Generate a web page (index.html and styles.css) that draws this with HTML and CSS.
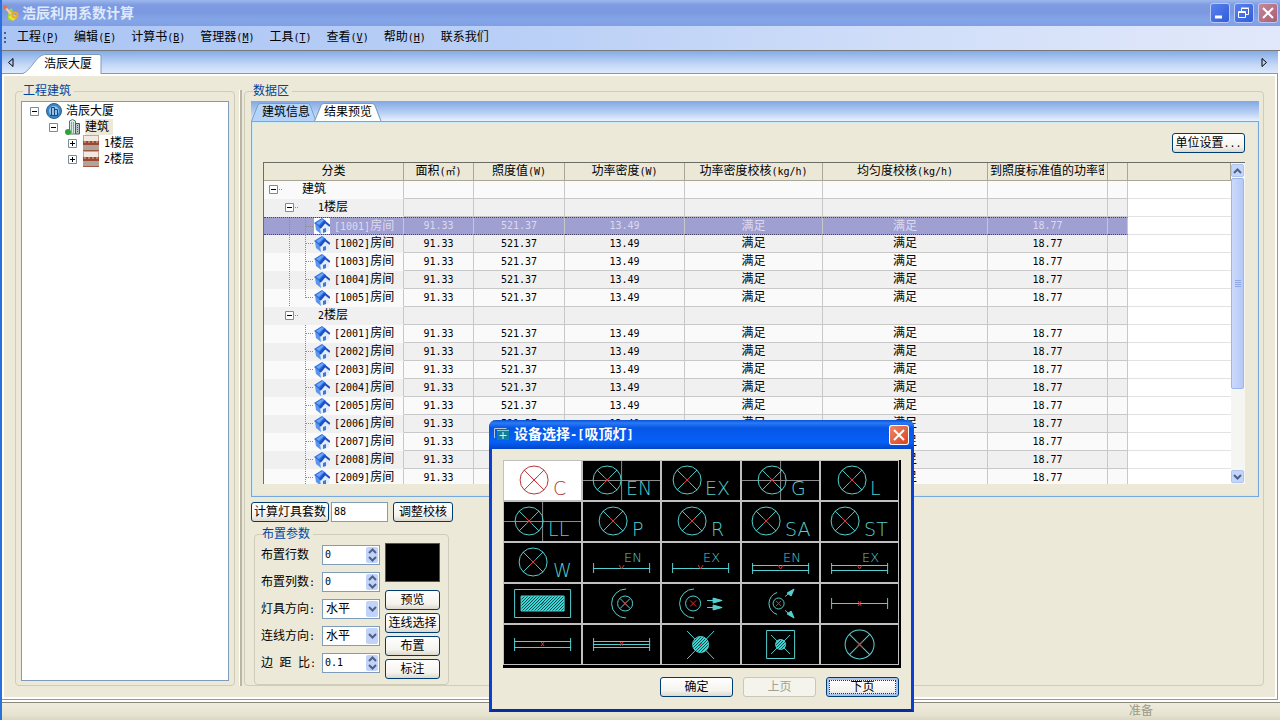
FILE: index.html
```html
<!DOCTYPE html>
<html lang="zh-CN">
  <head>
    <meta charset="UTF-8" />
    <meta name="viewport" content="width=device-width, initial-scale=1.0" />
    <title>浩辰利用系数计算</title>
    <link rel="stylesheet" href="styles.css">
  </head>
  <body>
    <svg class="defs" width="0" height="0" aria-hidden="true">
      <defs>
        <symbol id="house" viewBox="0 0 16 16">
          <path d="M1 6l6 4v6l-5-4z" fill="#5b96ee" />
          <path d="M6 10l5-6 4 4v5l-8 3z" fill="#e3ecfb" />
          <path d="M0 5 8 0l4 3-6 7z" fill="#2a6be0" />
          <path d="M2 5l6-4 2 1-5 5z" fill="#6ba6f8" />
          <path d="M6 10l5-6 5 4" fill="none" stroke="#1c4fc0" stroke-width="2" />
          <path d="M9 11l3-1v4l-3 1z" fill="#3f78cf" />
        </symbol>
        <symbol id="floor" viewBox="0 0 16 16">
          <path d="M0 0h16v16H0z" fill="#f3e9e3" />
          <path d="M0 0h1v16H0zM15 0h1v16h-1zM0 0h16v1H0z" fill="#c8a493" />
          <path d="M0 6h16v4H0z" fill="#9b4a31" />
          <path d="M1 7h2M5 7h2M9 7h2M13 7h2" stroke="#e9b9a0" />
          <path d="M0 10h16v5H0z" fill="#b0a39c" />
          <path d="M0 15h16v1H0z" fill="#a2583f" />
        </symbol>
        <symbol id="minus" viewBox="0 0 9 9">
          <path d="M.5.5h8v8h-8z" fill="#fff" stroke="#7b8a93" />
          <path d="M2 4.5h5" stroke="#000" />
        </symbol>
        <symbol id="plus" viewBox="0 0 9 9">
          <path d="M.5.5h8v8h-8z" fill="#fff" stroke="#7b8a93" />
          <path d="M2 4.5h5M4.5 2v5" stroke="#000" />
        </symbol>
        <symbol id="chevron-down" viewBox="0 0 9 6">
          <path d="M1 1l3.500 3.500L8 1" fill="none" stroke="#4d6185" stroke-width="2" />
        </symbol>
        <symbol id="chevron-up" viewBox="0 0 9 6">
          <path d="M1 5l3.500-3.500L8 5" fill="none" stroke="#4d6185" stroke-width="2" />
        </symbol>
        <symbol id="lamp" viewBox="-15 -15 30 30">
          <circle r="14" />
          <path d="M-10-10 10 10M-10 10 10-10" />
          <path class="mark" d="M-3-3 3 3M-3 3 3-3" />
        </symbol>
        <pattern id="hatch" width="3" height="3" patternUnits="userSpaceOnUse">
          <path d="M0 0h3v3H0z" fill="#3fdede" />
          <path d="M0 3 3 0" stroke="#043a3a" stroke-width="1" />
        </pattern>
      </defs>
    </svg>

    <header class="titlebar">
      <svg class="app-icon" width="18" height="18" viewBox="0 0 18 18">
        <path d="M6 6l4-2 2 9-4 4-2-2z" fill="#9fd632" />
        <path d="M6 13l5 4 5-4-5-3z" fill="#e8e32c" />
        <path d="M2 2l7 8" stroke="#f7c9a0" stroke-width="2" />
        <circle cx="13" cy="11" r="2.500" fill="none" stroke="#f2a331" stroke-width="2" />
        <circle cx="3" cy="3" r="2" fill="#d9794c" />
      </svg>
      <h1>浩辰利用系数计算</h1>
      <div class="window-buttons">
        <button type="button" class="win-btn" aria-label="最小化">
          <svg width="20" height="20" viewBox="0 0 20 20"><path d="M5 14h7" stroke="#fff" stroke-width="3" /></svg>
        </button>
        <button type="button" class="win-btn" aria-label="还原">
          <svg width="20" height="20" viewBox="0 0 20 20" fill="none" stroke="#fff">
            <path d="M7.500 8V5.500h7v6H12M7 5h8" />
            <path d="M4.500 8.500h7v6h-7zM4 9.500h8" />
          </svg>
        </button>
        <button type="button" class="win-btn close" aria-label="关闭">
          <svg width="20" height="20" viewBox="0 0 20 20"><path d="M5 5l10 10M15 5 5 15" stroke="#fff" stroke-width="2" /></svg>
        </button>
      </div>
    </header>

    <nav class="menubar">
      <a href="#">工程<span class="latin">(<u>P</u>)</span></a>
      <a href="#">编辑<span class="latin">(<u>E</u>)</span></a>
      <a href="#">计算书<span class="latin">(<u>B</u>)</span></a>
      <a href="#">管理器<span class="latin">(<u>M</u>)</span></a>
      <a href="#">工具<span class="latin">(<u>T</u>)</span></a>
      <a href="#">查看<span class="latin">(<u>V</u>)</span></a>
      <a href="#">帮助<span class="latin">(<u>H</u>)</span></a>
      <a href="#">联系我们</a>
    </nav>

    <div class="doc-tabs">
      <button type="button" class="scroll-tab" aria-label="向左">
        <svg width="6" height="9" viewBox="0 0 6 9"><path d="M5 .5v8L.5 4.500z" fill="none" stroke="#000" /></svg>
      </button>
      <button type="button" class="doc-tab">
        <svg viewBox="0 0 80 20" preserveAspectRatio="none"><path d="M0 20C10 16 14 1 23 .5h54q2 0 2 2V20" fill="#fff" stroke="#7b9ebd" /></svg>
        <span>浩辰大厦</span>
      </button>
      <button type="button" class="scroll-tab right" aria-label="向右">
        <svg width="6" height="9" viewBox="0 0 6 9"><path d="M1 .5v8l4.500-4z" fill="none" stroke="#000" /></svg>
      </button>
    </div>

    <main class="page">
      <fieldset class="group project">
        <legend>工程建筑</legend>
        <ul class="tree">
          <li>
            <svg width="9" height="9"><use href="#minus" /></svg>
            <svg width="18" height="16" viewBox="0 0 18 16">
              <circle cx="9" cy="8" r="7.500" fill="#3d86c6" stroke="#2a5f96" />
              <circle cx="9" cy="8" r="5" fill="#8fc3ec" />
              <path d="M6.500 12V4.500h3V12M9.500 6.500h3V12M5 12.500h8" fill="none" stroke="#1d4a7a" />
            </svg>
            <span>浩辰大厦</span>
          </li>
          <li class="level-1">
            <svg width="9" height="9"><use href="#minus" /></svg>
            <svg width="18" height="16" viewBox="0 0 18 16">
              <path d="M5.500 15V2l3-1.500L11.500 2v13z" fill="#dbe9e4" stroke="#4c7a6c" />
              <path d="M7.500 3v11M9.500 3v11" stroke="#7fa99b" />
              <path d="M11.500 15V4.500h4V15z" fill="#b9c4c9" stroke="#4b565c" />
              <path d="M13.500 6v8" stroke="#4b565c" stroke-dasharray="1 1" />
              <circle cx="4" cy="13" r="3" fill="#2fa23a" />
            </svg>
            <span class="current">建筑</span>
          </li>
          <li class="level-2">
            <svg width="9" height="9"><use href="#plus" /></svg>
            <svg width="18" height="16"><use href="#floor" width="16" height="16" /></svg>
            <span><span class="latin">1</span>楼层</span>
          </li>
          <li class="level-2">
            <svg width="9" height="9"><use href="#plus" /></svg>
            <svg width="18" height="16"><use href="#floor" width="16" height="16" /></svg>
            <span><span class="latin">2</span>楼层</span>
          </li>
        </ul>
      </fieldset>

      <div class="splitter"></div>

      <fieldset class="group data">
        <legend>数据区</legend>
        <div class="tab-strip">
          <button type="button" class="tab">
            <svg viewBox="0 0 66 18" preserveAspectRatio="none"><path d="M.5 18 7 2q1-1.500 3-1.500h46q2 0 3 1.500l6 16" fill="#b4d4fa" stroke="#7b9ebd" /></svg>
            <span>建筑信息</span>
          </button>
          <button type="button" class="tab active">
            <svg viewBox="0 0 66 18" preserveAspectRatio="none"><path d="M.5 18 7 2q1-1.500 3-1.500h46q2 0 3 1.500l6 16" fill="#fff" stroke="#7b9ebd" /></svg>
            <span>结果预览</span>
          </button>
        </div>

        <div class="tab-panel">
          <button type="button" class="btn unit">单位设置<span class="latin">...</span></button>
          <div class="grid-view">
            <div class="grid-scroll">
              <table>
                <colgroup>
                  <col class="c-name"><col class="c-area"><col class="c-lux"><col class="c-density">
                  <col class="c-check"><col class="c-uniform"><col class="c-std"><col class="c-extra"><col>
                </colgroup>
                <thead>
                  <tr>
                    <th>分类</th>
                    <th>面积<span class="latin">(㎡)</span></th>
                    <th>照度值<span class="latin">(W)</span></th>
                    <th>功率密度<span class="latin">(W)</span></th>
                    <th>功率密度校核<span class="latin">(kg/h)</span></th>
                    <th>均匀度校核<span class="latin">(kg/h)</span></th>
                    <th><div class="clip">到照度标准值的功率密度</div></th>
                    <th></th>
                    <th></th>
                  </tr>
                </thead>
                <tbody id="rows"></tbody>
              </table>
            </div>
            <div class="scrollbar">
              <button type="button" aria-label="向上滚动"><svg width="9" height="6"><use href="#chevron-up" /></svg></button>
              <div class="thumb"></div>
              <button type="button" aria-label="向下滚动"><svg width="9" height="6"><use href="#chevron-down" /></svg></button>
            </div>
          </div>
        </div>

        <div class="actions">
          <button type="button" class="btn">计算灯具套数</button>
          <input type="text" class="field latin" value="88" aria-label="灯具套数" />
          <button type="button" class="btn adjust">调整校核</button>
        </div>

        <fieldset class="group params">
          <legend>布置参数</legend>
          <div class="form">
            <label for="rows-count">布置行数</label>
            <div class="control">
              <input type="text" id="rows-count" class="field latin" value="0" />
              <span class="arrows"><svg width="9" height="6"><use href="#chevron-up" /></svg><svg width="9" height="6"><use href="#chevron-down" /></svg></span>
            </div>
            <label for="cols-count">布置列数<span class="latin">:</span></label>
            <div class="control">
              <input type="text" id="cols-count" class="field latin" value="0" />
              <span class="arrows"><svg width="9" height="6"><use href="#chevron-up" /></svg><svg width="9" height="6"><use href="#chevron-down" /></svg></span>
            </div>
            <label for="lamp-dir">灯具方向<span class="latin">:</span></label>
            <div class="control">
              <select id="lamp-dir" class="field"><option>水平</option><option>垂直</option></select>
              <span class="arrows"><svg width="9" height="6"><use href="#chevron-down" /></svg></span>
            </div>
            <label for="wire-dir">连线方向<span class="latin">:</span></label>
            <div class="control">
              <select id="wire-dir" class="field"><option>水平</option><option>垂直</option></select>
              <span class="arrows"><svg width="9" height="6"><use href="#chevron-down" /></svg></span>
            </div>
            <label for="edge-ratio" class="spread"><i>边</i><i>距</i><i>比<span class="latin">:</span></i></label>
            <div class="control">
              <input type="text" id="edge-ratio" class="field latin" value="0.1" />
              <span class="arrows"><svg width="9" height="6"><use href="#chevron-up" /></svg><svg width="9" height="6"><use href="#chevron-down" /></svg></span>
            </div>
          </div>
          <div class="side">
            <div class="preview"></div>
            <button type="button" class="btn">预览</button>
            <button type="button" class="btn">连线选择</button>
            <button type="button" class="btn">布置</button>
            <button type="button" class="btn">标注</button>
          </div>
        </fieldset>
      </fieldset>
    </main>

    <footer class="statusbar"><span>准备</span></footer>

    <section class="dialog" role="dialog" aria-labelledby="dialog-title">
      <header>
        <svg width="16" height="16" viewBox="0 0 16 16">
          <path d="M.5 11V1.500h12" fill="none" stroke="#b9c6d8" />
          <path d="M3 4h12v9H3z" fill="#0f7f9c" />
          <path d="M3 3.500h12" stroke="#7fd0e0" />
          <path d="M9 5v7M5.500 8.500h7" stroke="#e6fbff" />
        </svg>
        <h2 id="dialog-title">设备选择<span>-[</span>吸顶灯<span>]</span></h2>
        <button type="button" class="win-btn close" aria-label="关闭">
          <svg width="20" height="20" viewBox="0 0 20 20"><path d="M5 5l10 10M15 5 5 15" stroke="#fff" stroke-width="2" /></svg>
        </button>
      </header>
      <div class="dialog-body">
        <div class="symbols">
          <button type="button" class="selected"><svg viewBox="0 0 77 39"><use href="#lamp" x="15" y="4" width="30" height="30" /><text x="49" y="34">C</text></svg></button>
          <button type="button"><svg viewBox="0 0 77 39"><path class="cross" d="M0 19.500h77M38.500 0v39" /><use href="#lamp" x="9" y="4" width="30" height="30" /><text x="43" y="34">EN</text></svg></button>
          <button type="button"><svg viewBox="0 0 77 39"><use href="#lamp" x="10" y="4" width="30" height="30" /><text x="43" y="34">EX</text></svg></button>
          <button type="button"><svg viewBox="0 0 77 39"><path class="cross" d="M0 19.500h77M38.500 0v39" /><use href="#lamp" x="15" y="4" width="30" height="30" /><text x="49" y="34">G</text></svg></button>
          <button type="button"><svg viewBox="0 0 77 39"><use href="#lamp" x="16" y="4" width="30" height="30" /><text x="49" y="34">L</text></svg></button>

          <button type="button"><svg viewBox="0 0 77 39"><path class="cross" d="M0 19.500h77M38.500 0v39" /><use href="#lamp" x="10" y="4" width="30" height="30" /><text x="44" y="34">LL</text></svg></button>
          <button type="button"><svg viewBox="0 0 77 39"><use href="#lamp" x="15" y="4" width="30" height="30" /><text x="49" y="34">P</text></svg></button>
          <button type="button"><svg viewBox="0 0 77 39"><use href="#lamp" x="15" y="4" width="30" height="30" /><text x="49" y="34">R</text></svg></button>
          <button type="button"><svg viewBox="0 0 77 39"><use href="#lamp" x="9" y="4" width="30" height="30" /><text x="43" y="34">SA</text></svg></button>
          <button type="button"><svg viewBox="0 0 77 39"><use href="#lamp" x="9" y="4" width="30" height="30" /><text x="43" y="34">ST</text></svg></button>

          <button type="button"><svg viewBox="0 0 77 39"><use href="#lamp" x="14" y="4" width="30" height="30" /><text x="49" y="34">W</text></svg></button>
          <button type="button"><svg viewBox="0 0 77 39"><path d="M10 25.500h57M10.500 20v10M66.500 20v10" /><path class="mark" d="M36 22l2.500 4 2.500-4" /><text class="small" x="41" y="19">EN</text></svg></button>
          <button type="button"><svg viewBox="0 0 77 39"><path d="M10 25.500h57M10.500 20v10M66.500 20v10" /><path class="mark" d="M36 22l2.500 4 2.500-4" /><text class="small" x="41" y="19">EX</text></svg></button>
          <button type="button"><svg viewBox="0 0 77 39"><path d="M10 22.500h57M10 27.500h57M10.500 20v11M66.500 20v11" /><path class="mark" d="M36 22l2.500 4 2.500-4" /><text class="small" x="41" y="19">EN</text></svg></button>
          <button type="button"><svg viewBox="0 0 77 39"><path d="M10 22.500h57M10 27.500h57M10.500 20v11M66.500 20v11" /><path class="mark" d="M36 22l2.500 4 2.500-4" /><text class="small" x="41" y="19">EX</text></svg></button>

          <button type="button"><svg viewBox="0 0 77 39"><path d="M10.500 5.500h56v28h-56z" /><path class="hatched" d="M17 12h43v15H17z" /><path class="mark" d="M37 21l3-3" /></svg></button>
          <button type="button"><svg viewBox="0 0 77 39"><path d="M43 5a14.500 14.500 0 0 0 0 29" /><circle cx="42" cy="19.500" r="7.500" /><path d="M37 14.500l10 10M37 24.500l10-10" /><path class="mark" d="M40 17.500l4 4M40 21.500l4-4" /></svg></button>
          <button type="button"><svg viewBox="0 0 77 39"><path d="M32 5a14.500 14.500 0 0 0 0 29" /><circle cx="31" cy="19.500" r="7.500" /><path class="mark" d="M28 16.500l6 6M28 22.500l6-6" /><path d="M45 16.500h15M45 23.500h15" /><path class="filled" d="M51 14l9 2.500-9 2.500zM51 21l9 2.500-9 2.500z" /></svg></button>
          <button type="button"><svg viewBox="0 0 77 39"><path d="M35 8.500a11.500 11.500 0 0 0 0 22" /><circle cx="36.500" cy="19.500" r="5.500" /><path class="mark" d="M34 17l5 5M34 22l5-5" /><path d="M43 12.500l5-4M43 26.500l5 4" /><path class="filled" d="M45 9l7-4-3 7zM45 30l7 4-3-7z" /></svg></button>
          <button type="button"><svg viewBox="0 0 77 39"><path d="M10 19.500h57M10.500 14v11M66.500 14v11" /><path class="mark" d="M37 17l3 5M40 17l-3 5" /></svg></button>

          <button type="button"><svg viewBox="0 0 77 39"><path d="M10 16.500h57M10 22.500h57M10.500 13v13M66.500 13v13" /><path class="mark" d="M37 17l3 4M40 17l-3 4" /></svg></button>
          <button type="button"><svg viewBox="0 0 77 39"><path d="M10 16.500h57M10 19.500h57M10 22.500h57M10.500 13v13M66.500 13v13" /><path class="mark" d="M37 17l3 4M40 17l-3 4" /></svg></button>
          <button type="button"><svg viewBox="0 0 77 39"><path d="M25 6l27 28M25 34 52 6" /><circle class="hatched" cx="38.500" cy="19.500" r="8" /><path class="mark" d="M37 21l3-3" /></svg></button>
          <button type="button"><svg viewBox="0 0 77 39"><path d="M24.500 5.500h28v28h-28zM29 10l19 19M29 29l19-19" /><circle class="hatched" cx="38.500" cy="19.500" r="5" /></svg></button>
          <button type="button"><svg viewBox="0 0 77 39"><use href="#lamp" x="23" y="4" width="31" height="31" /></svg></button>
        </div>
        <div class="dialog-buttons">
          <button type="button" class="btn">确定</button>
          <button type="button" class="btn" disabled>上页</button>
          <button type="button" class="btn default">下页</button>
        </div>
      </div>
    </section>

    <script src="script.js"></script>
  </body>
</html>
```

FILE: styles.css
```css
* {
  box-sizing: border-box;
}
body {
  margin: 0;
  min-height: 100vh;
  display: flex;
  flex-direction: column;
  position: relative;
  overflow: hidden;
  border-left: 2px solid #2a6fdb;
  background-color: #ffffff;
  color: #000;
}
body,
button,
input,
select {
  font-family: "Liberation Sans", "Noto Sans CJK SC", sans-serif;
  font-size: 12px;
  line-height: 14px;
}
button {
  padding: 0;
}
svg {
  display: block;
  flex: none;
}
.defs {
  position: absolute;
}
.latin {
  font-family: "DejaVu Sans Mono", "Noto Sans CJK SC", monospace;
  font-size: 10px;
}

/* title bar */
.titlebar {
  height: 26px;
  display: flex;
  align-items: center;
  gap: 2px;
  padding-right: 2px;
  background: linear-gradient(#9db8ee 0, #7e9be2 5px, #7b98e0 12px, #84a5e8 20px, #809fe4 100%);
}
.titlebar h1 {
  flex: 1;
  margin: 0;
  font-size: 14px;
  line-height: 20px;
  color: #dfe9fb;
}
.window-buttons {
  display: flex;
  gap: 4px;
}
.win-btn {
  width: 20px;
  height: 20px;
  border: 0;
  border-radius: 3px;
  box-shadow: inset 0 0 0 1px #b9c9f4;
  background: linear-gradient(135deg, #5b84ee, #2f5bd8);
}
.win-btn.close {
  background: linear-gradient(135deg, #c98a9c, #a85a70);
}

/* menu */
.menubar {
  height: 25px;
  display: flex;
  align-items: center;
  gap: 15px;
  padding: 0 15px 2px;
  position: relative;
  border-bottom: 1px solid #77797a;
  background: linear-gradient(90deg, #abc5f4, #b9cff6 40%, #d3e0f9 75%, #e2e8fa);
}
.menubar::before {
  content: "";
  position: absolute;
  left: 2px;
  top: 6px;
  height: 11px;
  border-left: 2px dotted #4a5f8e;
}
.menubar a {
  color: #000;
  text-decoration: none;
}

/* document tabs */
.doc-tabs {
  height: 23px;
  display: flex;
  align-items: flex-end;
  margin-right: 2px;
  border-bottom: 1px solid #7b9ebd;
  background: linear-gradient(#85abe6, #c2d6f6 60%, #dde9fc);
}
.scroll-tab {
  width: 20px;
  height: 22px;
  padding-left: 6px;
  border: 0;
  background: none;
}
.scroll-tab.right {
  margin-left: auto;
  padding-left: 3px;
}
.doc-tab,
.tab {
  position: relative;
  border: 0;
  background: none;
}
.doc-tab {
  width: 80px;
  height: 20px;
  margin-bottom: -1px;
  padding-left: 12px;
}
.doc-tab svg,
.tab svg {
  position: absolute;
  left: 0;
  top: 0;
  width: 100%;
  height: 100%;
}
.doc-tab span,
.tab span {
  position: relative;
}

/* main area */
.page {
  flex: 1;
  display: flex;
  min-height: 0;
  margin: 0 2px 2px 0;
  padding: 10px 13px 13px;
  border: solid #7b9ebd;
  border-width: 0 1px 1px 0;
  box-shadow: inset 0 0 0 2px #fff;
  background-color: #ece9d8;
}
.group {
  display: flex;
  flex-direction: column;
  min-width: 0;
  margin: 0;
  border: 1px solid #cfccb8;
  border-radius: 4px;
}
.group > legend {
  margin-left: 2px;
  padding: 0 3px 0 0;
  color: #0046a0;
}
.project {
  flex: none;
  width: 220px;
  padding: 3px 5px 4px;
}
.splitter {
  width: 3px;
  margin: 6px 2px 0 4px;
  border-left: 1px solid #fff;
  background-color: #b9b6a8;
}
.data {
  flex: 1;
  padding: 3px 4px 0 6px;
}
.tree {
  height: 100%;
  margin: 0;
  padding: 1px 8px;
  list-style: none;
  border: 1px solid #7f9db9;
  background-color: #fff;
}
.tree li {
  display: flex;
  align-items: center;
  gap: 3px;
  height: 16px;
}
.tree li svg + svg {
  margin-left: 3px;
}
.tree .level-1 {
  padding-left: 19px;
}
.tree .level-2 {
  padding-left: 38px;
}
.tree .current {
  padding: 1px 4px 1px 0;
  background-color: #ece9d8;
}

/* inner tabs */
.tab-strip {
  display: flex;
  align-items: flex-end;
  height: 20px;
  flex: none;
  background: linear-gradient(#82a8e4, #b9d0f4 60%, #e9f1fd);
}
.tab {
  width: 66px;
  height: 18px;
  padding-left: 4px;
}
.tab + .tab {
  margin-left: -3px;
}
.tab.active {
  width: 68px;
  padding: 0;
}
.tab-panel {
  flex: 1;
  display: flex;
  flex-direction: column;
  min-height: 0;
  gap: 9px;
  padding: 11px 13px 12px 11px;
  border: 1px solid #74a8de;
  box-shadow: inset 0 0 0 1px #cdeaf7;
}
.btn {
  height: 20px;
  border: 1px solid #003c74;
  border-radius: 3px;
  background: linear-gradient(#ffffff, #f4f3ee 70%, #dcd8cc);
  white-space: nowrap;
}
.btn:disabled {
  color: #a1a192;
  border-color: #c9c7ba;
  background: #f4f3ec;
}
.btn.unit {
  align-self: flex-end;
  width: 73px;
}

/* result grid */
.grid-view {
  flex: 1;
  display: flex;
  min-height: 0;
  border: solid #6d6d68;
  border-width: 1px 0 0 1px;
  background-color: #fff;
}
.grid-scroll {
  flex: 1;
  height: 0;
  min-height: 100%;
  min-width: 0;
  overflow: hidden;
}
table {
  width: 100%;
  table-layout: fixed;
  border-collapse: separate;
  border-spacing: 0;
}
.c-name { width: 140px; }
.c-area { width: 70px; }
.c-lux { width: 91px; }
.c-density { width: 120px; }
.c-check { width: 138px; }
.c-uniform { width: 165px; }
.c-std { width: 120px; }
.c-extra { width: 20px; }
th,
td {
  height: 18px;
  padding: 0;
  line-height: 17px;
  text-align: center;
  white-space: nowrap;
  border-right: 1px solid #c8c8c8;
  border-bottom: 1px solid #c8c8c8;
}
th {
  font-weight: normal;
  background-color: #ebe8d8;
  border-color: #a9a696;
}
.clip {
  overflow: hidden;
  margin: 0 3px 0 2px;
  text-align: left;
}
tbody tr {
  background-color: #f0f0f0;
}
tbody tr:nth-child(odd) {
  background-color: #fafafa;
}
tbody td:first-child {
  border-bottom-color: transparent;
}
tbody td:last-child {
  background-color: #fff;
  border-right: 0;
  border-bottom-color: #e2e2e2;
}
td.num {
  font-family: "DejaVu Sans Mono", monospace;
  font-size: 10px;
}
tr.selected td:not(:last-child) {
  color: #dcdaee;
  background-color: #9f9fd2;
  border-top: 1px dotted #45456a;
  border-bottom: 1px dotted #45456a;
  line-height: 16px;
}
tr.selected .node {
  height: 16px;
}
.node {
  display: flex;
  align-items: center;
  height: 17px;
}
.node .label {
  margin-left: 4px;
}
.node .guide {
  fill: none;
  stroke: #8b8b8b;
  stroke-dasharray: 1 1;
}
tr.selected .house {
  background-color: #fff;
}

.scrollbar {
  display: flex;
  flex-direction: column;
  gap: 1px;
  width: 14px;
  padding: 1px 1px 1px 0;
  background-color: #f5f5f1;
}
.scrollbar button {
  display: flex;
  align-items: center;
  justify-content: center;
  height: 13px;
  border: 1px solid #b0c4ee;
  border-radius: 2px;
  background-color: #c4d5fb;
}
.thumb {
  flex: 1;
  margin-bottom: 80px;
  border: 1px solid #9db5ea;
  border-radius: 2px;
  background:
    repeating-linear-gradient(#8fa9e6 0 1px, transparent 1px 2px) center / 6px 8px no-repeat,
    linear-gradient(90deg, #cbdafc, #b5c9f6);
}

/* layout parameters */
.actions {
  display: flex;
  gap: 2px;
  padding: 5px 0;
}
.actions .btn {
  width: 78px;
}
.actions .field {
  width: 57px;
}
.actions .adjust {
  width: 60px;
  margin-left: 3px;
}
.field {
  height: 20px;
  padding: 0 0 2px 2px;
  border: 1px solid #7f9db9;
  border-radius: 0;
  background-color: #fff;
}
select.field {
  appearance: none;
  padding: 0 0 0 3px;
}
.params {
  flex-direction: row;
  gap: 5px;
  width: 195px;
  margin-left: 3px;
  padding: 2px 8px 5px 6px;
}
.params > legend {
  margin-left: 1px;
}
.form {
  display: grid;
  grid-template-columns: 58px 58px;
  column-gap: 3px;
  row-gap: 7px;
  align-content: start;
  align-items: center;
  padding-top: 2px;
}
.form label {
  white-space: nowrap;
}
.form .spread {
  display: flex;
  justify-content: space-between;
  padding-right: 3px;
}
.spread i {
  font-style: normal;
}
.control {
  position: relative;
  display: flex;
}
.control .field {
  width: 100%;
}
.arrows {
  position: absolute;
  right: 2px;
  top: 2px;
  bottom: 2px;
  width: 12px;
  display: flex;
  flex-direction: column;
  align-items: center;
  justify-content: space-evenly;
  border-radius: 2px;
  background-color: #c2d3fa;
  pointer-events: none;
}
.side {
  display: flex;
  flex: 1;
  flex-direction: column;
  gap: 3px;
}
.preview {
  height: 39px;
  margin-bottom: 5px;
  border: 1px solid #555;
  background-color: #000;
}

/* status bar */
.statusbar {
  height: 18px;
  padding: 1px 127px 0 0;
  text-align: right;
  color: #9b9988;
  border-top: 1px solid #8b887a;
  background: linear-gradient(#efecdf, #e6e3d0 70%, #d9d6c2);
}

/* device dialog */
.dialog {
  position: absolute;
  left: 487px;
  top: 420px;
  width: 425px;
  border: solid #0a3fd0;
  border-width: 0 3px 3px;
  border-bottom-color: #0a2ba0;
  border-radius: 7px 7px 0 0;
  background-color: #ece9d8;
}
.dialog header {
  display: flex;
  align-items: center;
  gap: 4px;
  height: 29px;
  margin: 0 -3px;
  padding: 0 5px;
  border-radius: 7px 7px 0 0;
  background: linear-gradient(#0a4fd6 0, #2a7bf6 3px, #0656e6 8px, #0560f6 22px, #0345c8 100%);
}
.dialog h2 {
  flex: 1;
  margin: 0;
  font-size: 14px;
  line-height: 20px;
  color: #fff;
}
.dialog h2 span {
  font-family: "DejaVu Sans Mono", monospace;
  font-size: 12px;
}
.dialog .close {
  background: linear-gradient(135deg, #ee8a6c, #d8401c);
  box-shadow: inset 0 0 0 1px #fff;
}
.dialog-body {
  padding: 11px 10px 12px 11px;
}
.symbols {
  display: grid;
  grid-template-columns: repeat(5, 1fr);
  gap: 2px;
  padding: 1px;
  background-color: #c0c0c0;
  border: solid #000;
  border-width: 0 2px 3px 0;
}
.symbols button {
  height: 39px;
  border: 0;
  background-color: #000;
}
.symbols svg {
  width: 100%;
  height: 100%;
  fill: none;
  stroke: #55cfcf;
}
.symbols text {
  font-family: "DejaVu Sans Light", "DejaVu Sans", sans-serif;
  font-weight: 200;
  font-size: 19px;
  fill: #55cfcf;
  stroke: none;
}
.symbols .small {
  font-size: 13px;
}
.symbols .filled {
  fill: #55cfcf;
}
.mark {
  stroke: #e03030;
}
.symbols .cross {
  stroke: #8a8a8a;
}
.symbols .hatched {
  fill: url(#hatch);
}
.symbols .selected {
  background-color: #fff;
}
.symbols .selected svg {
  stroke: #b43838;
}
.symbols .selected text {
  fill: #b43838;
}
.dialog-buttons {
  display: flex;
  justify-content: flex-end;
  gap: 10px;
  padding: 9px 2px 0 0;
}
.dialog-buttons .btn {
  width: 73px;
}
.btn.default {
  box-shadow: inset 0 0 0 2px #a9c3f0;
  outline: 1px dotted #333;
  outline-offset: -4px;
}
```

FILE: script.js
```js
const floors = [
  { name: "1", first: 1001, count: 5 },
  { name: "2", first: 2001, count: 9 },
];

const values = ["91.33", "521.37", "13.49", "满足", "满足", "18.77"];

function emptyCells(count) {
  return "<td></td>".repeat(count);
}

function box(x) {
  return `<svg width="${x + 16}" height="17">
    <use href="#minus" x="${x}" y="4" width="9" height="9" />
    <path class="guide" d="M${x + 10} 8.500h4" />
  </svg>`;
}

function roomRow(number, last, rail, selected) {
  const cells = values
    .map((v) => `<td class="${v === "满足" ? "" : "num"}">${v}</td>`)
    .join("");
  const lines = `${rail ? "M25.500 0v17" : ""}M41.500 0v${last ? 9 : 17}M42 8.500h8`;
  return `
    <tr class="${selected ? "selected" : ""}">
      <td>
        <div class="node">
          <svg class="guide" width="50" height="17"><path d="${lines}" /></svg>
          <svg class="house" width="16" height="16"><use href="#house" /></svg>
          <span class="label"><span class="latin">[${number}]</span>房间</span>
        </div>
      </td>
      ${cells}${emptyCells(2)}
    </tr>`;
}

let html = `
  <tr>
    <td><div class="node">${box(5)}<span style="margin-left: 17px">建筑</span></div></td>
    ${emptyCells(8)}
  </tr>`;

floors.forEach((floor, index) => {
  html += `
    <tr>
      <td><div class="node">${box(21)}<span style="margin-left: 17px"><span class="latin">${floor.name}</span>楼层</span></div></td>
      ${emptyCells(8)}
    </tr>`;
  for (let i = 0; i < floor.count; i++) {
    html += roomRow(floor.first + i, i === 4 && index === 0, index === 0, index === 0 && i === 0);
  }
});

document.getElementById("rows").innerHTML = html;
```
